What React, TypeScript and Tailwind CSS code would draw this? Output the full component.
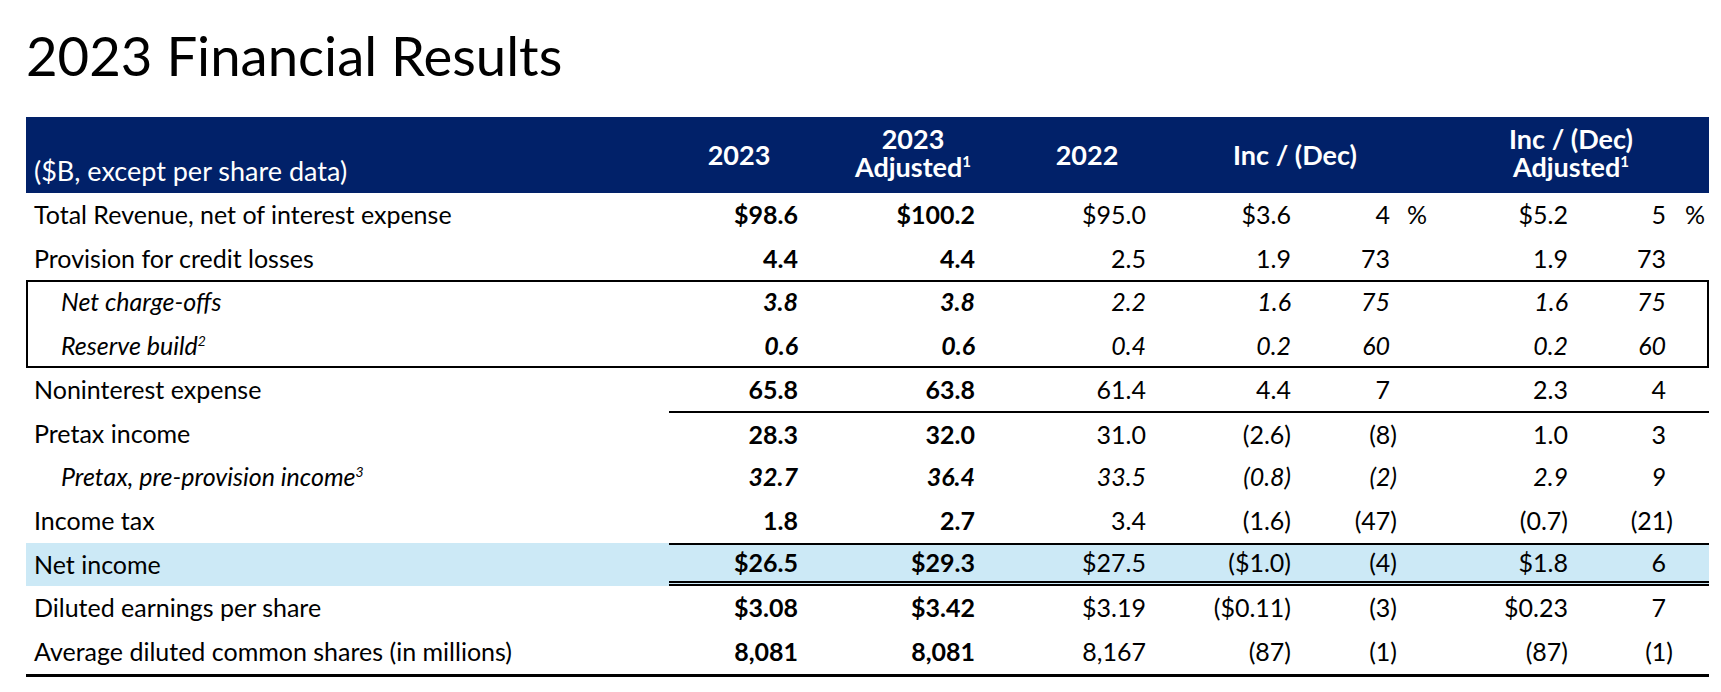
import React from 'react';

type Row = {
  label: string;
  sup?: string;
  italic?: boolean;
  values: string[];
  pct?: boolean;
  lineTop?: boolean;
  doubleBottom?: boolean;
  highlight?: boolean;
};

const rows: Row[] = [
  { label: 'Total Revenue, net of interest expense', values: ['$98.6', '$100.2', '$95.0', '$3.6', '4', '$5.2', '5'], pct: true },
  { label: 'Provision for credit losses', values: ['4.4', '4.4', '2.5', '1.9', '73', '1.9', '73'] },
  { label: 'Net charge-offs', italic: true, values: ['3.8', '3.8', '2.2', '1.6', '75', '1.6', '75'] },
  { label: 'Reserve build', sup: '2', italic: true, values: ['0.6', '0.6', '0.4', '0.2', '60', '0.2', '60'] },
  { label: 'Noninterest expense', values: ['65.8', '63.8', '61.4', '4.4', '7', '2.3', '4'] },
  { label: 'Pretax income', lineTop: true, values: ['28.3', '32.0', '31.0', '(2.6)', '(8)', '1.0', '3'] },
  { label: 'Pretax, pre-provision income', sup: '3', italic: true, values: ['32.7', '36.4', '33.5', '(0.8)', '(2)', '2.9', '9'] },
  { label: 'Income tax', values: ['1.8', '2.7', '3.4', '(1.6)', '(47)', '(0.7)', '(21)'] },
  { label: 'Net income', lineTop: true, doubleBottom: true, highlight: true, values: ['$26.5', '$29.3', '$27.5', '($1.0)', '(4)', '$1.8', '6'] },
  { label: 'Diluted earnings per share', values: ['$3.08', '$3.42', '$3.19', '($0.11)', '(3)', '$0.23', '7'] },
  { label: 'Average diluted common shares (in millions)', values: ['8,081', '8,081', '8,167', '(87)', '(1)', '(87)', '(1)'] },
];

// percent columns let the closing paren hang past the digits
const Pct = ({ v }: { v: string }) =>
  v.endsWith(')') ? <span className="-mr-[7px]">{v}</span> : <span>{v}</span>;

const DataRow = ({ row }: { row: Row }) => {
  const [a, b, c, d, e, f, g] = row.values;
  return (
    <div className={`flex h-[43.7px] ${row.highlight ? 'bg-[#cce9f6]' : ''} ${row.italic ? 'italic' : ''}`}>
      <div className={`w-[643px] shrink-0 flex items-center ${row.italic ? 'pl-[35px]' : 'pl-[8px]'}`}>
        <span>
          {row.label}
          {row.sup && <span className="relative -top-[9px] text-[14px]">{row.sup}</span>}
        </span>
      </div>
      <div
        className={`flex flex-1 items-center ${row.lineTop ? 'border-t-2 border-black' : ''} ${
          row.doubleBottom ? 'border-b-[5px] border-double border-black' : ''
        }`}
      >
        <div className="w-[129px] text-right font-bold">{a}</div>
        <div className="w-[177px] text-right font-bold">{b}</div>
        <div className="w-[171px] text-right">{c}</div>
        <div className="w-[145px] text-right">{d}</div>
        <div className="w-[99px] flex justify-end"><Pct v={e} /></div>
        <div className="w-[43px] pl-[17px]">{row.pct ? '%' : ''}</div>
        <div className="w-[135px] text-right">{f}</div>
        <div className="w-[98px] flex justify-end"><Pct v={g} /></div>
        <div className="w-[43px] pl-[19px]">{row.pct ? '%' : ''}</div>
      </div>
    </div>
  );
};

const App = () => {
  return (
    <div className="min-h-screen w-[1721px] bg-white text-black font-['Lato',sans-serif] pt-[28px]">
      <h1 className="pl-[26px] text-[54.5px] leading-none font-normal">2023 Financial Results</h1>

      <div className="mt-[34.5px] ml-[26px] w-[1683px] text-[25px]">
        {/* Header */}
        <div className="flex h-[76px] bg-[#012169] text-white">
          <div className="w-[643px] shrink-0 flex items-end pl-[8px] pb-[6px] text-[27px] leading-[32px]">
            ($B, except per share data)
          </div>
          <div className="flex flex-1 items-center font-bold text-[27px] leading-[28px] text-center">
            <div className="w-[140px]">2023</div>
            <div className="w-[208px]">
              2023
              <br />
              Adjusted<span className="relative -top-[10px] text-[15px]">1</span>
            </div>
            <div className="w-[140px]">2022</div>
            <div className="w-[276px]">Inc / (Dec)</div>
            <div className="w-[276px]">
              Inc / (Dec)
              <br />
              Adjusted<span className="relative -top-[10px] text-[15px]">1</span>
            </div>
          </div>
        </div>

        {/* Body */}
        {rows.slice(0, 2).map((row, i) => (
          <DataRow key={i} row={row} />
        ))}
        <div className="shadow-[inset_0_0_0_2px_#000]">
          {rows.slice(2, 4).map((row, i) => (
            <DataRow key={i} row={row} />
          ))}
        </div>
        {rows.slice(4).map((row, i) => (
          <DataRow key={i} row={row} />
        ))}
        <div className="h-[3px] bg-black" />
      </div>
    </div>
  );
};

export default App;
